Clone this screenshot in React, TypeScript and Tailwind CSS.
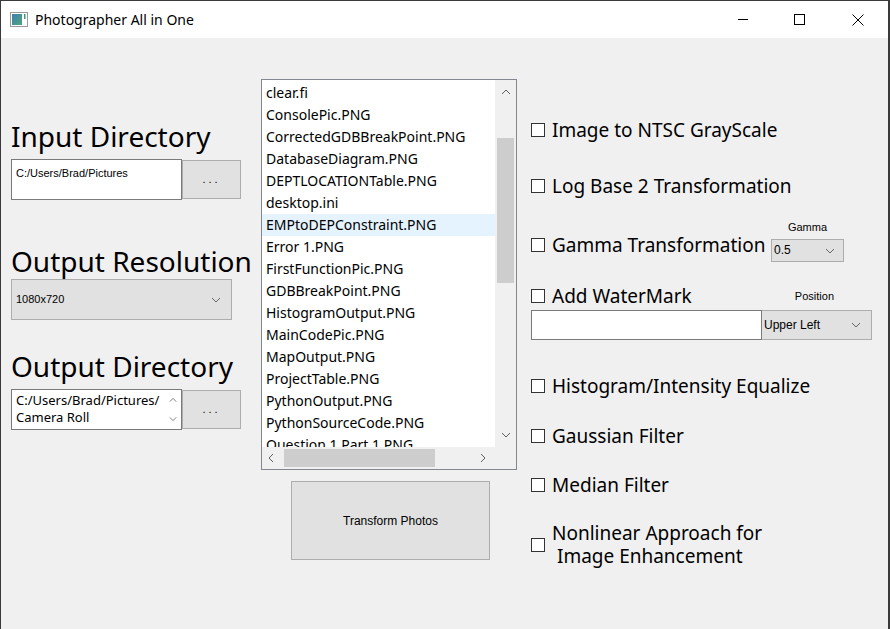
import React from "react";

const files = [
  "clear.fi",
  "ConsolePic.PNG",
  "CorrectedGDBBreakPoint.PNG",
  "DatabaseDiagram.PNG",
  "DEPTLOCATIONTable.PNG",
  "desktop.ini",
  "EMPtoDEPConstraint.PNG",
  "Error 1.PNG",
  "FirstFunctionPic.PNG",
  "GDBBreakPoint.PNG",
  "HistogramOutput.PNG",
  "MainCodePic.PNG",
  "MapOutput.PNG",
  "ProjectTable.PNG",
  "PythonOutput.PNG",
  "PythonSourceCode.PNG",
  "Question 1 Part 1.PNG",
];

const ui = { fontFamily: '"Noto Sans", "Open Sans", sans-serif' };
const small = { fontFamily: '"Liberation Sans", Arial, sans-serif' };

function Chevron({ up = false, className = "" }: { up?: boolean; className?: string }) {
  return (
    <svg width="10" height="6" viewBox="0 0 10 6" className={className}>
      <polyline
        points={up ? "1,5 5,1 9,5" : "1,1 5,5 9,1"}
        fill="none"
        stroke="currentColor"
        strokeWidth="1"
      />
    </svg>
  );
}

function Check({ label, className = "" }: { label: React.ReactNode; className?: string }) {
  return (
    <div className={`flex items-center h-[24px] ${className}`}>
      <span className="w-[14px] h-[14px] border border-[#333] bg-white shrink-0" />
      <span className="ml-[7px] text-[19px] leading-[24px] text-black whitespace-pre" style={ui}>
        {label}
      </span>
    </div>
  );
}

function DotsButton() {
  return (
    <div
      className="w-[59px] h-[39px] mt-[1px] bg-[#e1e1e1] border border-[#adadad] flex items-center justify-center text-[11px] tracking-[3px] text-black"
      style={small}
    >
      ...
    </div>
  );
}

export default function App() {
  return (
    <div className="w-[890px] h-[629px] bg-[#f0f0f0] border-l border-t border-r-2 border-[#3a3a3a] overflow-hidden">
      {/* ===== TITLE BAR ===== */}
      <div className="h-[37px] bg-white flex items-center">
        <svg width="18" height="15" viewBox="0 0 18 15" className="ml-[9px]">
          <rect x="0.5" y="0.5" width="17" height="14" fill="#fff" stroke="#9a9a9a" />
          <defs>
            <linearGradient id="g" x1="0" y1="0" x2="1" y2="1">
              <stop offset="0" stopColor="#3f7fb5" />
              <stop offset="1" stopColor="#4fa57a" />
            </linearGradient>
          </defs>
          <rect x="2" y="2" width="10" height="11" fill="url(#g)" />
          <rect x="14" y="2" width="1.5" height="5" fill="#3c9a8a" />
        </svg>
        <span className="ml-[7px] text-[14px] text-black" style={ui}>
          Photographer All in One
        </span>
        <div className="ml-auto flex h-full">
          <div className="w-[56px] flex items-center justify-center">
            <span className="w-[10px] h-[1px] bg-black" />
          </div>
          <div className="w-[56px] flex items-center justify-center">
            <span className="w-[11px] h-[11px] border border-black" />
          </div>
          <div className="w-[61px] flex items-center justify-center">
            <svg width="12" height="12" viewBox="0 0 12 12">
              <path d="M0.5 0.5 L11.5 11.5 M11.5 0.5 L0.5 11.5" stroke="#000" strokeWidth="1" />
            </svg>
          </div>
        </div>
      </div>

      {/* ===== CONTENT ===== */}
      <div className="flex">
        {/* LEFT */}
        <div className="ml-[10px] w-[240px]">
          <div className="mt-[82px] text-[28px] leading-[32px] text-black whitespace-nowrap" style={ui}>
            Input Directory
          </div>
          <div className="mt-[7px] flex items-start">
            <div className="w-[171px] h-[41px] bg-white border border-[#7a7a7a] px-[4px] pt-[5px] text-[11px] text-black" style={small}>
              C:/Users/Brad/Pictures
            </div>
            <DotsButton />
          </div>

          <div className="mt-[45px] text-[28px] leading-[32px] text-black whitespace-nowrap" style={ui}>
            Output Resolution
          </div>
          <div className="mt-[2px] w-[221px] h-[41px] bg-[#e1e1e1] border border-[#adadad] flex items-center pl-[4px] pr-[10px] text-[11px] text-black" style={small}>
            1080x720
            <Chevron className="ml-auto text-[#666]" />
          </div>

          <div className="mt-[30px] text-[28px] leading-[32px] text-black whitespace-nowrap" style={ui}>
            Output Directory
          </div>
          <div className="mt-[7px] flex items-start">
            <div className="w-[171px] h-[41px] bg-white border border-[#7a7a7a] flex">
              <div className="flex-1 pl-[4px] pt-[2px] text-[13px] leading-[17px] text-black" style={ui}>
                C:/Users/Brad/Pictures/
                <br />
                Camera Roll
              </div>
              <div className="w-[17px] flex flex-col items-center justify-around text-[#606060]">
                <Chevron up className="w-[8px]" />
                <Chevron className="w-[8px]" />
              </div>
            </div>
            <DotsButton />
          </div>
        </div>

        {/* MIDDLE */}
        <div className="ml-[10px] w-[256px] mt-[41px]">
          <div className="h-[391px] border border-[#828790] bg-white flex flex-col">
            <div className="flex h-[367px]">
              <div className="flex-1 overflow-hidden pt-[2px]">
                {files.map((f, i) => (
                  <div
                    key={i}
                    className={`h-[22px] leading-[22px] pl-[4px] text-[14px] text-black whitespace-nowrap ${
                      i === 6 ? "bg-[#e5f3ff]" : ""
                    }`}
                    style={ui}
                  >
                    {f}
                  </div>
                ))}
              </div>
              <div className="w-[21px] bg-[#f0f0f0] flex flex-col items-center text-[#606060]">
                <div className="h-[24px] flex items-center">
                  <Chevron up />
                </div>
                <div className="mt-[34px] w-[17px] h-[145px] bg-[#cdcdcd]" />
                <div className="mt-auto h-[24px] flex items-center">
                  <Chevron />
                </div>
              </div>
            </div>
            <div className="flex h-[22px] bg-[#f0f0f0]">
              <div className="flex-1 flex items-center text-[#606060]">
                <svg width="6" height="10" viewBox="0 0 6 10" className="ml-[6px]">
                  <polyline points="5,1 1,5 5,9" fill="none" stroke="currentColor" />
                </svg>
                <div className="ml-[10px] w-[151px] h-[18px] bg-[#cdcdcd]" />
                <svg width="6" height="10" viewBox="0 0 6 10" className="ml-auto mr-[9px]">
                  <polyline points="1,1 5,5 1,9" fill="none" stroke="currentColor" />
                </svg>
              </div>
              <div className="w-[21px]" />
            </div>
          </div>
          <div
            className="mt-[11px] ml-[30px] w-[199px] h-[79px] bg-[#e1e1e1] border border-[#adadad] flex items-center justify-center text-[12px] text-black"
            style={small}
          >
            Transform Photos
          </div>
        </div>

        {/* RIGHT */}
        <div className="ml-[14px] w-[341px] flex flex-col">
          <Check className="mt-[80px]" label="Image to NTSC GrayScale" />
          <Check className="mt-[32px]" label="Log Base 2 Transformation" />
          <div className="mt-[22px] flex items-start">
            <Check className="mt-[13px] w-[240px]" label="Gamma Transformation" />
            <div className="w-[73px] flex flex-col">
              <div className="h-[14px] leading-[14px] text-center text-[11px] text-black" style={small}>
                Gamma
              </div>
              <div className="mt-[5px] h-[23px] bg-[#e1e1e1] border border-[#adadad] flex items-end pb-[2px] pl-[2px] pr-[8px] text-[12px] text-black" style={small}>
                0.5
                <Chevron className="ml-auto mb-[5px] text-[#666]" />
              </div>
            </div>
          </div>
          <div className="mt-[22px] flex items-center">
            <Check label="Add WaterMark" />
            <span className="ml-auto mr-[38px] text-[11px] text-black" style={small}>
              Position
            </span>
          </div>
          <div className="mt-[2px] flex h-[30px]">
            <div className="w-[231px] bg-white border border-[#7a7a7a]" />
            <div className="w-[110px] bg-[#e1e1e1] border border-[#adadad] border-l-0 flex items-center pl-[2px] pr-[10px] text-[12px] text-black" style={small}>
              Upper Left
              <Chevron className="ml-auto text-[#666]" />
            </div>
          </div>
          <Check className="mt-[34px]" label="Histogram/Intensity Equalize" />
          <Check className="mt-[26px]" label="Gaussian Filter" />
          <Check className="mt-[25px]" label="Median Filter" />
          <div className="mt-[25px] flex items-center">
            <span className="w-[14px] h-[14px] border border-[#333] bg-white shrink-0" />
            <span className="ml-[7px] text-[19px] leading-[23px] text-black whitespace-pre" style={ui}>
              {"Nonlinear Approach for\n Image Enhancement"}
            </span>
          </div>
        </div>
      </div>
    </div>
  );
}
